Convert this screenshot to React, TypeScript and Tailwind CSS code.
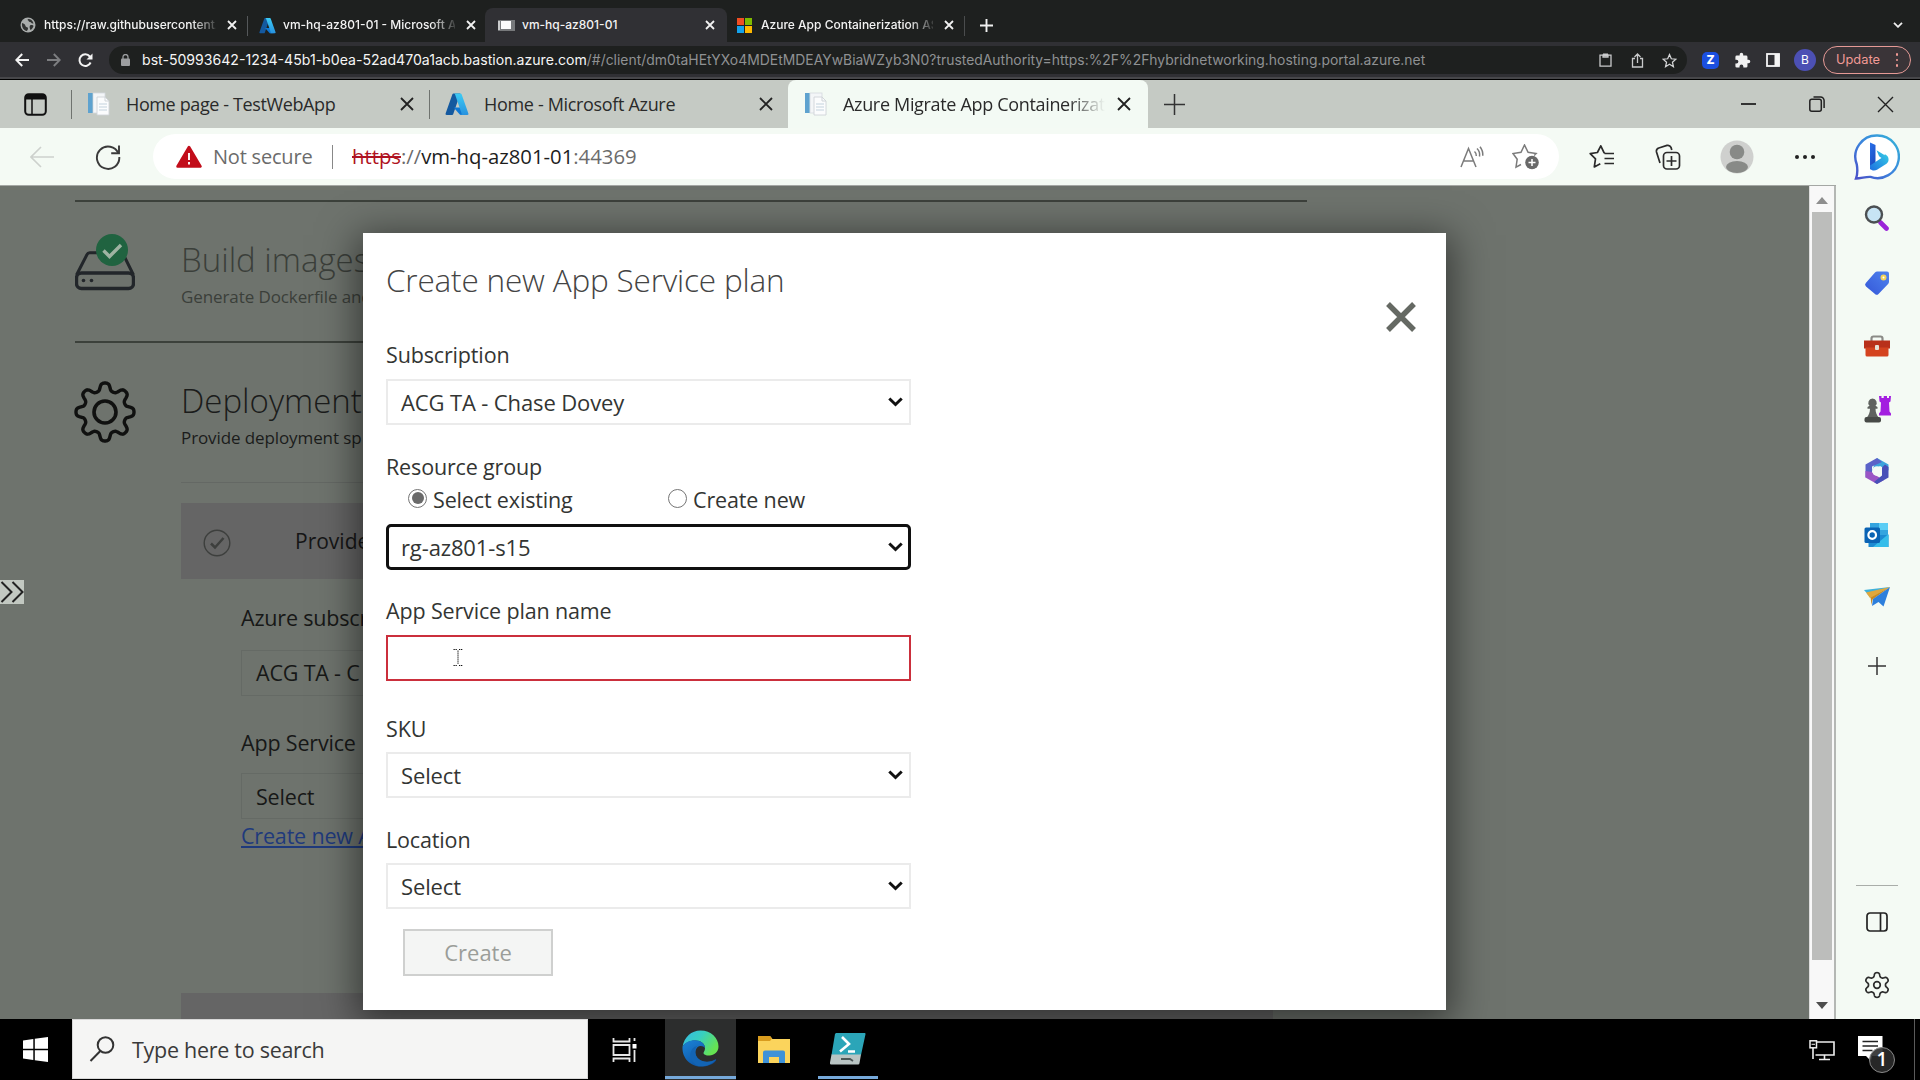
import React from "react";
import type { ReactNode } from "react";

const SEGOE = "font-['Open_Sans',sans-serif]";

function gearPath(c: number, radius: number, depth: number, lobes: number) {
  const pts: string[] = [];
  for (let i = 0; i <= 180; i++) {
    const t = (i / 180) * Math.PI * 2;
    const wave = Math.tanh(1.6 * Math.cos(lobes * t)) / Math.tanh(1.6);
    const r = radius + depth * wave;
    pts.push(`${(c + r * Math.sin(t)).toFixed(2)} ${(c - r * Math.cos(t)).toFixed(2)}`);
  }
  return `M${pts.join("L")}Z`;
}

function Cross({ size, width, color }: { size: number; width: number; color: string }) {
  return (
    <svg width={size} height={size} viewBox="0 0 10 10" className="shrink-0" overflow="visible">
      <path d="M0 0L10 10M10 0L0 10" stroke={color} strokeWidth={(width * 10) / size} fill="none" />
    </svg>
  );
}

function Plus({ size, width, color }: { size: number; width: number; color: string }) {
  return (
    <svg width={size} height={size} viewBox={`0 0 ${size} ${size}`} className="shrink-0">
      <path d={`M${size / 2} 0V${size}M0 ${size / 2}H${size}`} stroke={color} strokeWidth={width} />
    </svg>
  );
}

function AzureLogo({ size, id }: { size: number; id: string }) {
  return (
    <svg width={size} height={size} viewBox="0 0 24 24" className="shrink-0">
      <defs>
        <linearGradient id={id} x1="0" y1="0" x2="0" y2="1">
          <stop offset="0" stopColor="#3ccbf4" />
          <stop offset="1" stopColor="#2892df" />
        </linearGradient>
      </defs>
      <path d="M8.5 1.5h6.8L8.2 22.2a1.2 1.2 0 0 1-1.1.8H1.6a1.1 1.1 0 0 1-1-1.5L7.4 2.3a1.2 1.2 0 0 1 1.1-.8z" fill="#14599f" />
      <path d="M18 15.5H8.6l6.2 7c.3.3.6.5 1 .5h5z" fill="#0f78d4" />
      <path d="M16.6 2.3a1.2 1.2 0 0 0-1.1-.8H8.9c.5 0 1 .3 1.1.8l6.6 19.2a1.1 1.1 0 0 1-1 1.5h6.8a1.1 1.1 0 0 0 1-1.5z" fill={`url(#${id})`} />
    </svg>
  );
}

function DocIcon() {
  return (
    <svg width="22" height="24" viewBox="0 0 22 24" className="shrink-0">
      <rect x="5" y="1" width="12" height="20" fill="#f4f6f8" stroke="#d5dade" strokeWidth=".8" />
      <path d="M9 5h8l4 4v14H9z" fill="#fbfcfd" stroke="#cfd4d8" strokeWidth=".9" />
      <path d="M17 5v4h4" fill="none" stroke="#cfd4d8" />
      <path d="M11 12h8M11 15h8M11 18h8" stroke="#c3d2de" strokeWidth="1.2" />
      <rect x="0" y="1" width="4.6" height="20" fill="#5ea2cf" />
    </svg>
  );
}

function ChromeTab({ icon, title, className }: { icon: ReactNode; title: string; className: string }) {
  return (
    <div className={`flex items-center pt-[8px] ${className}`}>
      {icon}
      <span className="flex-1 overflow-hidden whitespace-nowrap [mask-image:linear-gradient(to_right,black_86%,rgba(0,0,0,0.15))]">
        {title}
      </span>
      <span className="ml-[12px] flex">
        <Cross size={8} width={1.8} color="#f1f1f1" />
      </span>
    </div>
  );
}

function ChromeTabs() {
  return (
    <div className="flex h-[42px] shrink-0 bg-[#1e201f] font-[Inter,sans-serif] text-[12px] font-medium text-[#f3f3f3]">
      <ChromeTab
        className="w-[236px] pl-5"
        title="https://raw.githubusercontent.c"
        icon={
          <svg width="16" height="16" viewBox="0 0 16 16" className="mr-2 shrink-0">
            <circle cx="8" cy="8" r="7.5" fill="#a9acab" />
            <path d="M2 6c2 .5 3 1 3.500 3 .4 1.500 2.500.7 2.500 2.500 0 1-.6 1.500-1 2.500C4 13.500 1.500 11 2 6zM7.500 3c1.500.5 1 2 2.500 2s1 2 3.500 1.500C13 4 11 2 8 2zM10 8.500c1.500-.8 3-.3 3.500.5-.3 1.500-1.500 3-3 4-.5-1.500-1.500-3-.5-4.500z" fill="#303231" />
          </svg>
        }
      />
      <span className="ml-[11px] mt-[16px] h-[20px] w-px bg-[#55585a]" />
      <ChromeTab
        className="w-[227px] pl-[11px]"
        title="vm-hq-az801-01 - Microsoft A"
        icon={<span className="mr-[7px] flex"><AzureLogo size={17} id="azA" /></span>}
      />
      <div className="ml-[10px] mt-[8px] flex h-[34px] w-[242px] items-center rounded-t-[8px] bg-[#303034] pl-[13px] pr-[13px]">
        <svg width="17" height="11" viewBox="0 0 17 11" className="mr-[7px] shrink-0">
          <rect width="17" height="11" fill="#77797b" />
          <rect x="3" y="1" width="10" height="8" fill="#fbfbfb" />
          <rect x="0" y="1" width="2" height="9" fill="#c9cbcc" />
        </svg>
        <span className="flex-1 whitespace-nowrap">vm-hq-az801-01</span>
        <Cross size={8} width={1.8} color="#f1f1f1" />
      </div>
      <ChromeTab
        className="w-[226px] pl-[10px]"
        title="Azure App Containerization AS"
        icon={
          <span className="mr-[9px] grid size-[15px] shrink-0 grid-cols-2 gap-px">
            <span className="bg-[#f04e23]" />
            <span className="bg-[#7fba00]" />
            <span className="bg-[#14a3ec]" />
            <span className="bg-[#ffb900]" />
          </span>
        }
      />
      <span className="ml-[11px] mt-[16px] h-[20px] w-px bg-[#4a4c4d]" />
      <span className="ml-[15px] flex items-center pt-[8px]">
        <Plus size={13} width={1.9} color="#f1f1f1" />
      </span>
      <span className="ml-auto mr-[17px] flex items-center pt-[8px]">
        <svg width="10" height="6" viewBox="0 0 10 6">
          <path d="M1 .8L5 4.800L9 .8" fill="none" stroke="#eee" strokeWidth="1.8" />
        </svg>
      </span>
    </div>
  );
}

function ChromeToolbar() {
  return (
    <div className="flex h-[38px] shrink-0 items-center border-b border-black bg-[#303034] pb-[1px] font-[Inter,sans-serif] shadow-[inset_0_-2px_0_#47474a]">
      <svg width="14" height="14" viewBox="0 0 14 14" className="ml-[15px]">
        <path d="M14 7H1.500M7.200 1L1.300 7l5.900 6" fill="none" stroke="#f3f3f3" strokeWidth="2" />
      </svg>
      <svg width="14" height="14" viewBox="0 0 14 14" className="ml-[18px]">
        <path d="M0 7h12.500M6.800 1l5.900 6-5.900 6" fill="none" stroke="#7d7e81" strokeWidth="1.900" />
      </svg>
      <svg width="15" height="15" viewBox="0 0 15 15" className="ml-[17px]">
        <path d="M12.600 9.500A5.800 5.800 0 1 1 11.800 3.500L13 5" fill="none" stroke="#f3f3f3" strokeWidth="2" />
        <path d="M14.500 .5v6h-6z" fill="#f3f3f3" />
      </svg>
      <div className="ml-[16px] flex h-[28px] w-[1578px] items-center rounded-full bg-[#1e201f] pl-[12px] pr-[10px]">
        <svg width="9" height="12" viewBox="0 0 9 12" className="mr-[12px] shrink-0">
          <rect x="0" y="4.500" width="9" height="7.500" rx="1" fill="#9c9ea0" />
          <path d="M2 5V3a2.500 2.500 0 0 1 5 0v2" fill="none" stroke="#9c9ea0" strokeWidth="1.300" />
        </svg>
        <span className="whitespace-nowrap text-[14.100px] text-[#f5f5f5]">
          bst-50993642-1234-45b1-b0ea-52ad470a1acb.bastion.azure.com
        </span>
        <span className="whitespace-nowrap text-[13.910px] text-[#8f9193]">
          /#/client/dm0taHEtYXo4MDEtMDEAYwBiaWZyb3N0?trustedAuthority=https:%2F%2Fhybridnetworking.hosting.portal.azure.net
        </span>
        <span className="ml-auto flex items-center gap-[18px]">
          <svg width="13" height="14" viewBox="0 0 13 14">
            <path d="M1 2.200h11V13.200H1zM4 2h5v2H4z" fill="none" stroke="#c9cacb" strokeWidth="1.300" />
            <rect x="4" y="0.500" width="5" height="3" fill="#c9cacb" />
          </svg>
          <svg width="13" height="15" viewBox="0 0 13 15" className="ml-px">
            <path d="M4 5.500H1.500V14h10V5.500H9M6.500 10V1.500M3.500 4l3-3 3 3" fill="none" stroke="#c9cacb" strokeWidth="1.300" />
          </svg>
          <svg width="15" height="15" viewBox="0 0 24 24">
            <path d="M12 2.500l2.900 6.700 7.300.7-5.500 4.800 1.600 7.200L12 18.100l-6.300 3.800 1.600-7.200L1.800 9.900l7.300-.7z" fill="none" stroke="#d5d6d7" strokeWidth="2" />
          </svg>
        </span>
      </div>
      <span className="ml-[15px] flex size-[17px] items-center justify-center rounded-[5px] bg-[#1b4fe0] text-[12px] font-extrabold text-white">Z</span>
      <svg width="17" height="17" viewBox="0 0 24 24" className="ml-[15px]">
        <path d="M20.500 11H19V7a2 2 0 0 0-2-2h-4V3.500a2.500 2.500 0 0 0-5 0V5H4a2 2 0 0 0-2 2v3.800h1.500a2.700 2.700 0 0 1 0 5.400H2V20a2 2 0 0 0 2 2h3.800v-1.500a2.700 2.700 0 0 1 5.400 0V22H17a2 2 0 0 0 2-2v-4h1.500a2.500 2.500 0 0 0 0-5z" fill="#f1f1f1" />
      </svg>
      <svg width="14" height="14" viewBox="0 0 14 14" className="ml-[15px]">
        <rect x="1" y="1" width="12" height="12" fill="none" stroke="#f5f5f5" strokeWidth="1.800" />
        <rect x="8.500" y="1" width="5" height="12" fill="#f5f5f5" />
      </svg>
      <span className="ml-[14px] flex size-[22px] items-center justify-center rounded-full bg-[#4c50b4] text-[12px] text-white">B</span>
      <div className="ml-[7px] flex h-[28px] w-[88px] items-center rounded-full border border-[#e59a96] bg-[#3a3438] pl-[12px] text-[12.800px] text-[#f19a95]">
        Update
        <span className="ml-[16px] flex flex-col gap-[3px]">
          <span className="size-[2.500px] rounded-full bg-[#f19a95]" />
          <span className="size-[2.500px] rounded-full bg-[#f19a95]" />
          <span className="size-[2.500px] rounded-full bg-[#f19a95]" />
        </span>
      </div>
    </div>
  );
}

function EdgeTabs() {
  return (
    <div className={`flex h-[48px] shrink-0 items-center bg-[#c5cac4] text-[18px] tracking-[-0.330px] text-[#2a2a2a] ${SEGOE}`}>
      <svg width="23" height="23" viewBox="0 0 23 23" className="ml-[24px] shrink-0">
        <rect x="1.200" y="1.200" width="20.600" height="20.600" rx="3.500" fill="none" stroke="#111" strokeWidth="2" />
        <path d="M1.500 6V4a2.500 2.500 0 0 1 2.500-2.500h15A2.500 2.500 0 0 1 21.500 4v2z" fill="#111" stroke="#111" />
        <path d="M8 6v15" stroke="#111" strokeWidth="1.500" />
      </svg>
      <span className="ml-[24px] h-[29px] w-px bg-[#6f736f]" />
      <span className="ml-[16px] flex"><DocIcon /></span>
      <span className="ml-[16px] w-[275px] whitespace-nowrap tracking-[-0.380px]">Home page - TestWebApp</span>
      <Cross size={12} width={1.8} color="#222" />
      <span className="ml-[16px] h-[29px] w-px bg-[#6f736f]" />
      <span className="ml-[15px] flex"><AzureLogo size={24} id="azB" /></span>
      <span className="ml-[15px] w-[276px] whitespace-nowrap">Home - Microsoft Azure</span>
      <Cross size={12} width={1.8} color="#222" />
      <div className="ml-[16px] flex h-full w-[360px] items-center rounded-t-[8px] bg-[#f3faf4] pl-[17px]">
        <DocIcon />
        <span className="ml-[16px] w-[262px] overflow-hidden whitespace-nowrap [mask-image:linear-gradient(to_right,black_86%,transparent)]">
          Azure Migrate App Containerizat
        </span>
        <span className="ml-[13px] flex"><Cross size={12} width={1.8} color="#222" /></span>
      </div>
      <span className="ml-[16px] flex"><Plus size={21} width={1.5} color="#333" /></span>
      <span className="ml-auto h-[2px] w-[15px] bg-[#333]" />
      <svg width="16" height="16" viewBox="0 0 16 16" className="ml-[53px]">
        <rect x=".8" y="3.200" width="11.500" height="12" rx="2" fill="none" stroke="#222" strokeWidth="1.500" />
        <path d="M4.500 1h7a3.500 3.500 0 0 1 3.600 3.500V12" fill="none" stroke="#222" strokeWidth="1.500" />
      </svg>
      <span className="ml-[53px] mr-[27px] flex"><Cross size={15} width={1.4} color="#222" /></span>
    </div>
  );
}

function EdgeToolbar() {
  return (
    <div className={`flex h-[58px] shrink-0 items-center border-b border-[#a4a7a4] bg-[#f4faf4] text-[#6b6b6b] ${SEGOE}`}>
      <svg width="24" height="22" viewBox="0 0 24 22" className="ml-[30px] shrink-0">
        <path d="M24 11H1M11 1L1 11l10 10" fill="none" stroke="#cdd1cd" strokeWidth="1.600" />
      </svg>
      <svg width="26" height="26" viewBox="0 0 26 26" className="ml-[41px] shrink-0">
        <path d="M23.500 9.500A11.200 11.200 0 1 0 24.300 13" fill="none" stroke="#3a3a3a" strokeWidth="1.900" />
        <path d="M24 1.500V9.300H16.200" fill="none" stroke="#3a3a3a" strokeWidth="1.900" />
      </svg>
      <div className="ml-[32px] flex h-[45px] w-[1406px] items-center rounded-full bg-white pl-[23px] pr-[19px]">
        <svg width="26" height="23" viewBox="0 0 26 23" className="shrink-0">
          <path d="M13 2L24.500 21.500H1.500z" fill="#c20d1a" stroke="#c20d1a" strokeWidth="2.500" strokeLinejoin="round" />
          <path d="M13 8v7M13 17v2.500" stroke="#fff" strokeWidth="1.900" />
        </svg>
        <span className="ml-[11px] w-[119px] whitespace-nowrap text-[20px] tracking-[-0.200px]">Not secure</span>
        <span className="h-[24px] w-px bg-[#888]" />
        <span className="ml-[19px] whitespace-nowrap text-[20.300px]">
          <span className="text-[#b01322] line-through decoration-2">https</span>://
          <span className="text-[#1d1d1d]">vm-hq-az801-01</span>:44369
        </span>
        <svg width="24" height="22" viewBox="0 0 24 22" className="ml-auto shrink-0">
          <path d="M1 21L8.500 2.500 16 21M3.500 15h10M14.500 5.500a5 5 0 0 1 1.800 4.500M17 2.500a9 9 0 0 1 2.500 8M20 .8a13 13 0 0 1 2.800 9" fill="none" stroke="#7b7b7b" strokeWidth="1.500" />
        </svg>
        <svg width="28" height="26" viewBox="0 0 28 26" className="ml-[28px] shrink-0">
          <path d="M9 20.500l-5 2.700 1.200-8L1 9.500l8-1.200L12.500 1l3.600 7.300 8 1.200-2 2" fill="none" stroke="#7b7b7b" strokeWidth="1.500" />
          <circle cx="20" cy="18.500" r="6.800" fill="#686868" />
          <path d="M20 15v7M16.500 18.500h7" stroke="#fff" strokeWidth="1.500" />
        </svg>
      </div>
      <svg width="26" height="26" viewBox="0 0 26 26" className="ml-[30px] shrink-0">
        <path d="M16 9l-1-.3L11.800 1.800 8.400 8.500 1.200 9.700l5.300 5.200-1.200 8 6-3.200M15.500 9.500H25M15.500 14.500H25M15.500 19.500H25" fill="none" stroke="#2b2b2b" strokeWidth="1.700" strokeLinejoin="round" />
      </svg>
      <svg width="26" height="26" viewBox="0 0 26 26" className="ml-[40px] shrink-0">
        <path d="M5 19L1.500 8a3.500 3.500 0 0 1 2.300-4L12 1.400a3.500 3.500 0 0 1 4 2L16.800 6" fill="none" stroke="#2b2b2b" strokeWidth="1.700" />
        <rect x="8.500" y="8.500" width="16" height="16.500" rx="3.500" fill="none" stroke="#2b2b2b" strokeWidth="1.700" />
        <path d="M16.500 12v10M11.500 17h10" stroke="#2b2b2b" strokeWidth="1.700" />
      </svg>
      <svg width="34" height="34" viewBox="0 0 34 34" className="ml-[39px] shrink-0">
        <clipPath id="avatar"><circle cx="17" cy="17" r="16.500" /></clipPath>
        <circle cx="17" cy="17" r="16.500" fill="#cfd0ce" />
        <g clipPath="url(#avatar)" fill="#888a87">
          <circle cx="17" cy="12" r="7.300" />
          <ellipse cx="17" cy="27" rx="11" ry="6" />
        </g>
      </svg>
      <span className="ml-[41px] flex gap-[4px]">
        <span className="size-[4px] rounded-full bg-[#222]" />
        <span className="size-[4px] rounded-full bg-[#222]" />
        <span className="size-[4px] rounded-full bg-[#222]" />
      </span>
    </div>
  );
}

function StepSection({ icon, title, subtitle, tone, children, className }: { icon: ReactNode; title: string; subtitle: string; tone: string; children?: ReactNode; className: string }) {
  return (
    <section className={`ml-[75px] flex w-[1232px] border-t-2 border-[#3c413b] ${className}`}>
      <div className="w-[60px] shrink-0">{icon}</div>
      <div className="ml-[46px] flex-1 pt-[36px]">
        <h2 className={`flex h-[44px] items-center whitespace-nowrap text-[33px] font-light ${tone}`}>{title}</h2>
        <p className={`mt-[3px] flex h-[24px] items-center whitespace-nowrap text-[17px] tracking-[-0.100px] ${tone}`}>{subtitle}</p>
        {children}
      </div>
    </section>
  );
}

function PageBackdrop() {
  return (
    <div className={`h-full w-full overflow-hidden bg-[#6e736d] ${SEGOE}`}>
      <div className="h-[14px]" />
      <StepSection
        className="h-[141px]"
        tone="text-[#3b3f3a]"
        title="Build images"
        subtitle="Generate Dockerfile and"
        icon={
          <svg width="60" height="58" viewBox="0 0 60 58" className="mt-[31px]">
            <path d="M1.500 42L12 21.500a3 3 0 0 1 2.700-1.700h31a3 3 0 0 1 2.700 1.700L58.500 42" fill="none" stroke="#22262a" strokeWidth="3" />
            <rect x="1.500" y="40" width="57" height="15.500" rx="5" fill="none" stroke="#22262a" strokeWidth="3.400" />
            <circle cx="8.500" cy="47.500" r="1.800" fill="#22262a" />
            <circle cx="16.500" cy="47.500" r="1.800" fill="#22262a" />
            <circle cx="37" cy="17" r="16" fill="#206340" />
            <path d="M28.500 17.500l6 6L46 12" fill="none" stroke="#9fb3a2" strokeWidth="3.400" />
          </svg>
        }
      />
      <StepSection
        className="h-[700px]"
        tone="text-[#1b1c1b]"
        title="Deployment"
        subtitle="Provide deployment sp"
        icon={
          <svg width="62" height="62" viewBox="0 0 62 62" className="-ml-px mt-[38px]">
            <path d={gearPath(31, 25.2, 3.8, 8)} fill="none" stroke="#101110" strokeWidth="3.400" strokeLinejoin="round" />
            <circle cx="31" cy="31" r="11" fill="none" stroke="#101110" strokeWidth="3.600" />
          </svg>
        }
      >
        <div className="mt-[32px] h-px w-[1092px] bg-[#646864]" />
        <div className="mt-[20px] flex h-[76px] w-[1092px] items-center bg-[#656565] pt-[2px] text-[21px] font-medium text-[#161616]">
          <svg width="28" height="28" viewBox="0 0 28 28" className="ml-[22px] mt-px">
            <circle cx="14" cy="14" r="12.800" fill="none" stroke="#3d3f3d" strokeWidth="1.400" />
            <path d="M8 14.500l4 4L20.500 9" fill="none" stroke="#3d3f3d" strokeWidth="2.500" />
          </svg>
          <span className="ml-[64px]">Provide</span>
        </div>
        <div className="ml-[60px] whitespace-nowrap text-[21.500px] tracking-[-0.180px] text-[#171817]">
          <div className="mt-[25px] flex h-[28px] items-center">Azure subscr</div>
          <div className="mt-[18px] flex h-[46px] w-[525px] items-center border border-[#656a65] pl-[14px] pt-px">ACG TA - C</div>
          <div className="mt-[33px] flex h-[28px] items-center">App Service</div>
          <div className="mt-[16px] flex h-[46px] w-[525px] items-center border border-[#656a65] pl-[14px] pt-[3px]">Select</div>
          <div className="mt-[3px] flex h-[28px] items-center text-[#1f3a7c] underline underline-offset-2">Create new A</div>
        </div>
        <div className="mt-[143px] h-[40px] w-[1092px] bg-[#656565]" />
      </StepSection>
    </div>
  );
}

function Select({ value, focused, className }: { value: string; focused?: boolean; className: string }) {
  return (
    <div
      className={
        focused
          ? `flex h-[46px] items-center justify-between rounded-[5px] border-[3px] border-[#101010] pl-[12px] pr-[5px] ${className}`
          : `flex h-[46px] items-center justify-between border-2 border-[#ebebeb] pl-[13px] pr-[6px] ${className}`
      }
    >
      <span className="pt-px text-[22px] tracking-[-0.130px]">{value}</span>
      <svg width="15" height="10" viewBox="0 0 15 10" className="mb-px">
        <path d="M1.300 1.500L7.500 7.500L13.700 1.500" fill="none" stroke="#111" strokeWidth="3" />
      </svg>
    </div>
  );
}

function Label({ children, className }: { children: ReactNode; className: string }) {
  return <div className={`flex h-[28px] items-center whitespace-nowrap pt-[2px] text-[21.500px] tracking-[-0.150px] ${className}`}>{children}</div>;
}

function Radio({ checked }: { checked?: boolean }) {
  return (
    <span className="mb-[4px] flex size-[19px] items-center justify-center rounded-full border-[1.500px] border-[#757575] bg-white">
      {checked && <span className="size-[12px] rounded-full bg-[#6a6a6a]" />}
    </span>
  );
}

function PlanDialog() {
  return (
    <div className={`absolute left-[363px] top-[47px] flex h-[777px] w-[1083px] bg-white pl-[23px] text-[#333533] shadow-[0_8px_36px_6px_rgba(0,0,0,0.5)] ${SEGOE}`}>
      <div className="w-[525px]">
        <h1 className="flex h-[92px] items-center whitespace-nowrap pt-[2px] text-[31.500px] font-light tracking-[-0.180px] text-[#444]">Create new App Service plan</h1>
        <Label className="mt-[15px]">Subscription</Label>
        <Select className="mt-[11px]" value="ACG TA - Chase Dovey" />
        <Label className="mt-[27px]">Resource group</Label>
        <div className="mt-[5px] flex pl-[22px]">
          <Label className="w-[260px] gap-[6px]"><Radio checked />Select existing</Label>
          <Label className="gap-[6px]"><Radio />Create new</Label>
        </div>
        <Select className="mt-[11px]" value="rg-az801-s15" focused />
        <Label className="mt-[26px] tracking-[-0.070px]">App Service plan name</Label>
        <div className="mt-[11px] h-[46px] border-2 border-[#cb2f3c] pl-[65px] pt-[12px]">
          <svg width="10" height="17" viewBox="0 0 10 17">
            <path d="M.5 .5H4M6 .5H9.500M5 1.500V15.500M.5 16.500H4M6 16.500H9.500" stroke="#111" strokeWidth="1" strokeDasharray="1.300 .7" fill="none" />
          </svg>
        </div>
        <Label className="mt-[33px]">SKU</Label>
        <Select className="mt-[10px]" value="Select" />
        <Label className="mt-[27px]">Location</Label>
        <Select className="mt-[10px]" value="Select" />
        <button className="ml-[17px] mt-[20px] flex h-[47px] w-[150px] items-center justify-center border-2 border-[#cfd0cf] bg-[#f4f5f4] text-[22px] text-[#9b9d99]">Create</button>
      </div>
      <span className="ml-auto mr-[32px] mt-[71px] flex">
        <Cross size={26} width={5.4} color="#656963" />
      </span>
    </div>
  );
}

function ScrollBar() {
  return (
    <div className="flex w-[27px] shrink-0 flex-col items-center border-l border-r-2 border-l-[#ddd] border-r-[#b4b7b4] bg-[#f8f8f8]">
      <svg width="12" height="7" viewBox="0 0 12 7" className="mt-[11px]">
        <path d="M0 7L6 0l6 7z" fill="#8e8e8e" />
      </svg>
      <div className="mt-[8px] h-[748px] w-[20px] bg-[#bcbdbb]" />
      <svg width="12" height="7" viewBox="0 0 12 7" className="mt-[42px]">
        <path d="M0 0h12L6 7z" fill="#4d4d4d" />
      </svg>
    </div>
  );
}

function SideBar() {
  return (
    <div className="flex w-[84px] shrink-0 flex-col items-center bg-[#f4faf4] pr-[2px]">
      <svg width="46" height="46" viewBox="0 0 46 46" className="mt-[6px] shrink-0">
        <defs>
          <linearGradient id="bingRing" x1="1" y1="0" x2="0" y2="1">
            <stop offset="0" stopColor="#35b5d8" />
            <stop offset=".5" stopColor="#3b86dd" />
            <stop offset="1" stopColor="#4a50c8" />
          </linearGradient>
          <linearGradient id="bingB" x1="0" y1="0" x2=".4" y2="1">
            <stop offset="0" stopColor="#2870ea" />
            <stop offset="1" stopColor="#1b4cc0" />
          </linearGradient>
          <linearGradient id="bingTail" x1="1" y1="0" x2="0" y2="1">
            <stop offset="0" stopColor="#37d3e6" />
            <stop offset="1" stopColor="#1d6fe0" />
          </linearGradient>
        </defs>
        <path d="M23.500 1.500a21.300 21.300 0 1 1-7 41.400C12 42.500 7 44.500 2 44.500c1.500-4 1.800-8 .8-14A21.300 21.300 0 0 1 23.500 1.500z" fill="#fff" stroke="url(#bingRing)" strokeWidth="2.400" />
        <path d="M16 8.500l5.500 2.500v20.500L16 35.500z" fill="url(#bingB)" />
        <path d="M16 35.500L30 27v-6.200l-7.500-4.600 2.600 6 2.400 1.800L16 31.500v3c1.500 2.500 5 2.500 7 1.300l9.500-6c3-2 3-7.500-1.500-9.500z" fill="url(#bingTail)" />
      </svg>

      <svg width="26" height="26" viewBox="0 0 26 26" className="mt-[25px] shrink-0">
        <path d="M16.500 17.500l6 6" stroke="#9a24d8" strokeWidth="4.600" strokeLinecap="round" />
        <circle cx="10" cy="9.500" r="8" fill="#c7e4f4" stroke="#4b4f52" strokeWidth="2.400" />
      </svg>
      <svg width="26" height="26" viewBox="0 0 26 26" className="mt-[39px] shrink-0">
        <defs>
          <linearGradient id="tagFill" x1="1" y1="0" x2="0" y2="1">
            <stop offset="0" stopColor="#4f83ee" />
            <stop offset="1" stopColor="#3457d8" />
          </linearGradient>
        </defs>
        <path d="M13.500 1.500H23a2 2 0 0 1 2 2v8.300a3 3 0 0 1-.9 2.100L14.500 24a2.500 2.500 0 0 1-3.500 0L2 16.500a2.500 2.500 0 0 1-.2-3.500L11 2.500a3 3 0 0 1 2.500-1z" fill="url(#tagFill)" />
        <circle cx="19.500" cy="7.500" r="3" fill="#f1d25a" />
        <circle cx="19.500" cy="7.500" r="1" fill="#fff" />
      </svg>
      <svg width="28" height="22" viewBox="0 0 28 22" className="mt-[39px] shrink-0">
        <path d="M8.500 6V3.500A2 2 0 0 1 10.500 1.500h7a2 2 0 0 1 2 2V6" fill="none" stroke="#8a8a86" strokeWidth="2.200" />
        <path d="M1 5.500h26v8H1z" fill="#b8301a" />
        <path d="M2.500 12.500h23V20a1.500 1.500 0 0 1-1.500 1.500H4A1.500 1.500 0 0 1 2.500 20z" fill="#d4431f" />
        <rect x="12" y="10" width="4" height="5" rx="1" fill="#e5e0d6" />
      </svg>
      <svg width="28" height="28" viewBox="0 0 28 28" className="mt-[38px] shrink-0">
        <path d="M16 1h2.500v2h2.200V1H24v2h2V1h2l-.5 5.500-1.500 1 .5 9 1.500 2v2h-12v-2l1.500-2 .5-9-1.500-1z" fill="#a31fe0" />
        <path d="M9.500 3.500a4.300 4.300 0 0 1 3 7.300l2 1.200v1.800h-2c0 4 1.500 6.500 3 8.500H4c1.500-2 3-4.500 3-8.500H4.500V12l2-1.200a4.300 4.300 0 0 1 3-7.300z" fill="#5f625f" />
        <rect x="1.500" y="22" width="16.500" height="5.500" rx="2" fill="#474a47" />
      </svg>
      <svg width="26" height="28" viewBox="0 0 26 28" className="mt-[34px] shrink-0">
        <path d="M13 1l11.500 6.500v6L16 9 8 14z" fill="#3ca4dc" />
        <path d="M13 1L1.500 7.500v13L8 17V9.500L18 5z" fill="#5a62c8" />
        <path d="M1.500 14v6.500L13 27l7-4-9-5-3-3z" fill="#9a55c4" />
        <path d="M24.500 10v10.500L13 27l-3-2 8-6.500V10.500l3-3z" fill="#4750b8" />
        <circle cx="13" cy="14" r="4.800" fill="#f4faf4" />
      </svg>
      <svg width="26" height="26" viewBox="0 0 26 26" className="mt-[37px] shrink-0">
        <rect x="6" y="1" width="18" height="14" fill="#34a4df" />
        <rect x="15" y="1" width="9" height="7" fill="#5bcdf5" />
        <path d="M4.500 13H24.500V25H4.500z" fill="#1c8ad2" />
        <path d="M24.500 12L9 25h15.500z" fill="#36bdea" />
        <rect x=".5" y="5.500" width="15.500" height="15.500" rx="1.500" fill="#0a63b4" />
        <circle cx="8.200" cy="13" r="3.800" fill="none" stroke="#fff" strokeWidth="2.200" />
      </svg>
      <svg width="28" height="22" viewBox="0 0 28 22" className="mt-[38px] shrink-0">
        <path d="M1 4L27 1 7.500 11.500z" fill="#3fb1da" />
        <path d="M7.500 11L27 1 9.500 13.500 8.500 19z" fill="#c88a22" />
        <path d="M27 1L20.500 20.500l-5-4.500-6.500 4 1-7z" fill="#2d7fdc" />
        <path d="M3 6.500L27 1 7 12z" fill="#e0a73c" />
      </svg>
      <span className="mt-[49px] flex"><Plus size={18} width={1.5} color="#333" /></span>

      <span className="mt-[210px] h-px w-[42px] shrink-0 bg-[#a9ada9]" />
      <svg width="22" height="20" viewBox="0 0 22 20" className="mt-[26px] shrink-0">
        <rect x="1" y="1" width="20" height="18" rx="3" fill="none" stroke="#222" strokeWidth="1.700" />
        <path d="M14.500 1v18" stroke="#222" strokeWidth="1.700" />
      </svg>
      <svg width="28" height="28" viewBox="0 0 28 28" className="mt-[39px] shrink-0">
        <path d={gearPath(14, 10.4, 1.9, 6)} fill="none" stroke="#2d2d2d" strokeWidth="1.700" strokeLinejoin="round" />
        <circle cx="14" cy="14" r="3.300" fill="none" stroke="#2d2d2d" strokeWidth="1.700" />
      </svg>
    </div>
  );
}

function TaskBar() {
  return (
    <div className={`flex h-[61px] shrink-0 items-center bg-black ${SEGOE}`}>
      <svg width="25" height="25" viewBox="0 0 25 25" className="ml-[23px] shrink-0">
        <path d="M0 3.500L10.300 2v9.800H0zM11.800 1.800L25 0v11.800H11.800zM0 13.200h10.300V23L0 21.500zM11.800 13.200H25V25l-13.200-1.800z" fill="#fff" />
      </svg>
      <div className="ml-[24px] mb-px flex h-[60px] w-[516px] items-center border border-[#d8d8d8] bg-[#f5f5f4] pl-[16px]">
        <svg width="26" height="26" viewBox="0 0 26 26" className="shrink-0">
          <circle cx="16.500" cy="9" r="7.800" fill="none" stroke="#333" strokeWidth="2" />
          <path d="M11.300 15L1.500 25" stroke="#333" strokeWidth="2" />
        </svg>
        <span className="ml-[17px] whitespace-nowrap pt-[2px] text-[21.500px] tracking-[-0.280px] text-[#3a3a3a]">Type here to search</span>
      </div>
      <svg width="26" height="24" viewBox="0 0 26 24" className="ml-[24px] shrink-0">
        <path d="M1.500 0v3.500h16V0M1.500 24v-3.500h16V24M1.500 7h16v10h-16zM22.500 0v3M22.500 12v12" fill="none" stroke="#e8e8e8" strokeWidth="1.800" />
        <rect x="20.500" y="6" width="4" height="4.500" fill="#fff" />
      </svg>
      <div className="ml-[27px] flex h-full w-[71px] flex-col items-center bg-[#2c2d2d]">
        <svg width="37" height="37" viewBox="0 0 37 37" className="mt-[11px]">
          <defs>
            <linearGradient id="edgeTop" x1="0" y1="0" x2="1" y2=".5">
              <stop offset="0" stopColor="#35b8e6" />
              <stop offset=".5" stopColor="#38cfc0" />
              <stop offset="1" stopColor="#66e352" />
            </linearGradient>
            <linearGradient id="edgeLow" x1="0" y1="0" x2=".7" y2="1">
              <stop offset="0" stopColor="#1b83d8" />
              <stop offset="1" stopColor="#0c50a0" />
            </linearGradient>
          </defs>
          <path d="M.5 17C2 7 9.500.5 18.500.5 29 .5 36.500 8 36.500 16.500c0 5.500-4.500 9-9 9-3.500 0-6-1.200-6-2.600 0-1 1.500-1.700 1.500-4.900 0-4-4-7.500-9.500-7.500C7.500 10.500 2.500 13 .5 17z" fill="url(#edgeTop)" />
          <path d="M.5 17c2-4.500 7-6.800 12.500-6.800 5 0 10 3 10 7.800-1-1.500-3-2.300-5-2-4.500.5-6.500 8-2 12.500 5 5 13 4 17 1 .8-.5 1.500.3 1 1C31 34.500 25 36.500 19 36.500 8.500 36.500 0 28.500.5 17z" fill="url(#edgeLow)" />
          <path d="M16 15.700c-5 .5-9.500 6.300-7 12.800 1.300 3.500 4 6.200 7.500 7.800 7 .5 13-1.500 17-6.500-5 2.500-12.500 3-16.800-.8C12 25 12 18 16 15.700z" fill="#1364b4" />
        </svg>
        <span className="mt-auto mb-px h-[3px] w-full bg-[#76a9da]" />
      </div>
      <svg width="32" height="28" viewBox="0 0 32 28" className="ml-[22px] shrink-0">
        <path d="M0 0h12l2.500 3H32v24H0z" fill="#fbd45c" />
        <path d="M0 0h12l2 2.500-2 2.500H0z" fill="#d99c1e" />
        <path d="M5 27V16.500A2 2 0 0 1 7 14.500h18a2 2 0 0 1 2 2V27h-6v-6H11v6z" fill="#3e92d8" />
      </svg>
      <div className="ml-[28px] flex h-full w-[60px] flex-col items-center">
        <svg width="36" height="32" viewBox="0 0 36 32" className="mt-[14px]">
          <path d="M6 0h28.500a1 1 0 0 1 1 1.200L31 22H1.500L5 1z" fill="#2ba5b8" />
          <path d="M1.500 21.500H31L29.500 30a1.500 1.500 0 0 1-1.500 1.500H1.500a1.500 1.500 0 0 1-1.500-2z" fill="#b9c4c3" />
          <path d="M12 4l7 7-9 7.500M18 18.500h7" fill="none" stroke="#fff" strokeWidth="2.600" />
          <path d="M11 26h9l3 2" fill="none" stroke="#4c5656" strokeWidth="1.800" />
        </svg>
        <span className="mt-auto mb-px h-[3px] w-full bg-[#76a9da]" />
      </div>
      <svg width="26" height="22" viewBox="0 0 26 22" className="ml-auto shrink-0">
        <path d="M7 3h18v13H6.500M4 9v11M15.500 16v4M10 20.500h11" fill="none" stroke="#eee" strokeWidth="1.600" />
        <rect x="1" y="1.800" width="6.500" height="7" fill="#000" stroke="#eee" strokeWidth="1.500" />
        <path d="M2.500 5.300h3.500" stroke="#eee" />
      </svg>
      <div className="relative ml-[23px] h-[28px] w-[26px]">
        <svg width="26" height="28" viewBox="0 0 26 28">
          <path d="M0 0h24.500v20H14l-1 5-5-5H0z" fill="#fff" />
          <path d="M4.500 5.500h15.500M4.500 10h15.500M4.500 14.500h10" stroke="#222" strokeWidth="1.500" />
        </svg>
        <span className="absolute left-[11px] top-[11px] flex size-[26px] items-center justify-center rounded-full border border-[#8a8a8a] bg-[#2b2b2b]/90 text-[19px] font-semibold text-white">1</span>
      </div>
      <span className="ml-[30px] mr-[5px] h-full w-px bg-[#5a5a5a]" />
    </div>
  );
}

export default function App() {
  return (
    <div className="flex h-[1080px] w-[1920px] flex-col overflow-hidden bg-black">
      <ChromeTabs />
      <ChromeToolbar />
      <EdgeTabs />
      <div className="flex h-[891px] shrink-0">
        <div className="flex w-[1836px] flex-col">
          <EdgeToolbar />
          <div className="flex min-h-0 flex-1">
            <div className="relative min-w-0 flex-1 overflow-hidden">
              <PageBackdrop />
              <PlanDialog />
              <div className="absolute left-0 top-[394px] flex h-[24px] w-[24px] items-center bg-[#c2c8c1]">
                <svg width="24" height="24" viewBox="0 0 24 24">
                  <path d="M1.500 2l10 10-10 10M12.500 2l10 10-10 10" fill="none" stroke="#222" strokeWidth="2" />
                </svg>
              </div>
            </div>
            <ScrollBar />
          </div>
        </div>
        <SideBar />
      </div>
      <TaskBar />
    </div>
  );
}
